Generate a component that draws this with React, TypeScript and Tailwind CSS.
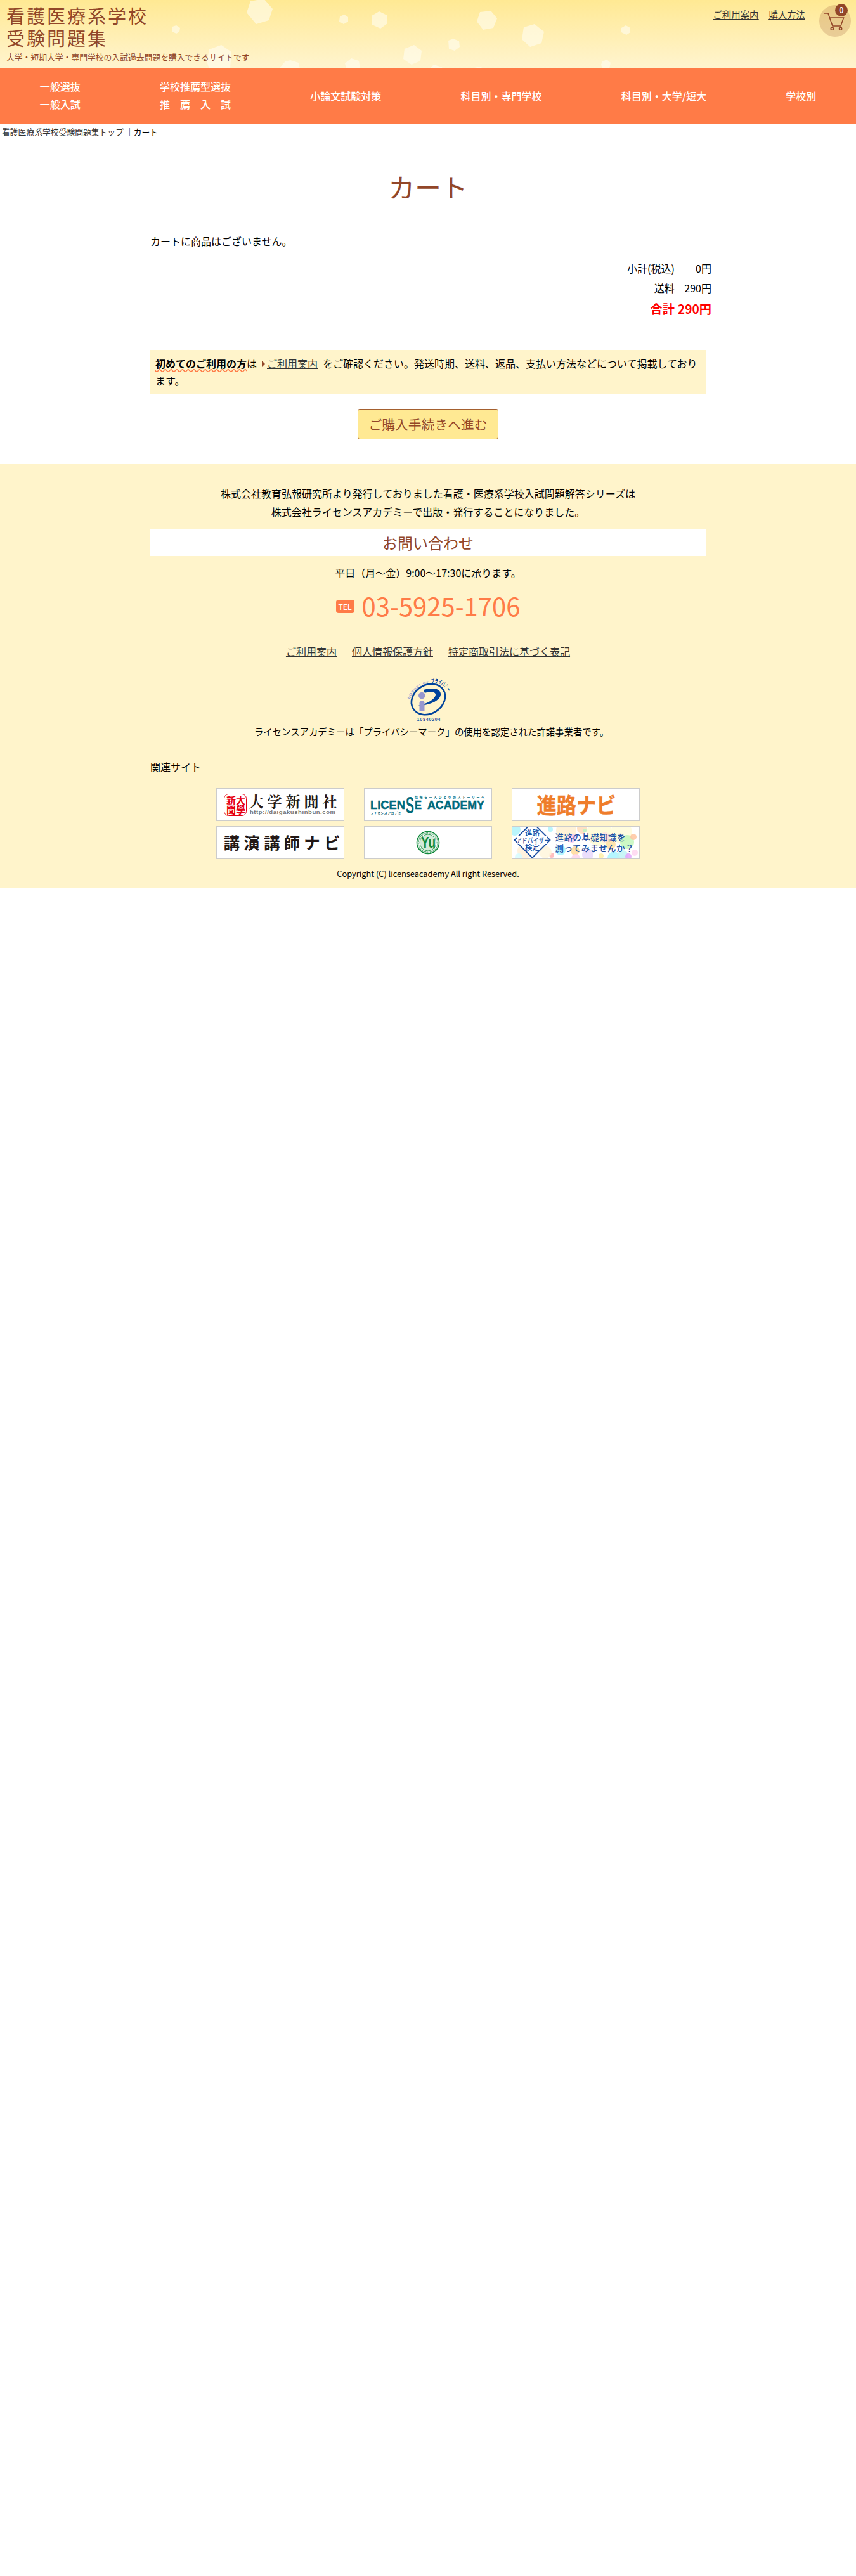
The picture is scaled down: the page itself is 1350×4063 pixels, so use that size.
import React from "react";

const brown = "#924628";

function Hexagons() {
  const polys = [
    "395,2 416,-2 430,14 424,32 404,38 389,20",
    "278,40 284,44 283,50 278,53 272,50 272,42",
    "330,78 349,71 365,82 363,108 330,108 326,97",
    "536,26 543,23 549,27 549,34 542,38 535,34",
    "586,25 598,18 610,24 611,37 600,45 587,39",
    "757,19 774,17 784,29 778,44 762,47 752,34",
    "826,43 843,38 858,50 854,68 836,74 823,62",
    "707,64 715,61 724,65 725,74 717,80 708,77",
    "638,77 653,71 665,80 663,96 649,102 636,93",
    "440,108 450,97 458,95 471,99 473,108",
    "544,100 554,92 566,96 568,108 546,108",
    "678,108 684,102 697,106 698,108",
    "743,108 758,105 761,108",
    "980,44 987,40 994,44 994,51 988,55 980,51",
    "950,97 957,94 963,99 961,108 950,108 948,102",
  ];
  return (
    <svg className="absolute inset-0" width="1350" height="108" aria-hidden="true">
      {polys.map((p) => (
        <polygon key={p} points={p} fill="#fffdf2" opacity="0.6" />
      ))}
    </svg>
  );
}

function Header() {
  return (
    <header className="relative flex h-[108px] justify-between overflow-hidden bg-linear-to-b from-[#ffe993] to-[#fff4cf]">
      <Hexagons />
      <div className="relative pl-[10px] pt-[7px] text-[#924628]">
        <h1 className="text-[29px] leading-[35px] font-normal tracking-[3px]">
          看護医療系学校
          <br />
          受験問題集
        </h1>
        <p className="pt-[2px] text-[12.8px] leading-[22px]">大学・短期大学・専門学校の入試過去問題を購入できるサイトです</p>
      </div>
      <div className="relative flex pr-2">
        <div className="flex gap-4 pt-[10px] pr-[22px] text-[14.4px] leading-[25px] text-[#333] underline">
          <a>ご利用案内</a>
          <a>購入方法</a>
        </div>
        <div className="relative mt-2 h-[50px] w-[50px] rounded-full bg-[#924628]/20">
          <svg className="absolute left-0 top-0" width="50" height="50" fill="none" stroke={brown} strokeWidth="1.6">
            <path d="M8 13H14L21 33H34L38.5 20H17" />
            <circle cx="20.3" cy="37.2" r="2.1" />
            <circle cx="33.6" cy="37.2" r="2.1" />
          </svg>
          <span className="absolute -top-[2px] left-[25px] flex h-5 w-5 items-center justify-center rounded-full bg-[#924628] text-[12.8px] leading-none font-medium text-white">
            0
          </span>
        </div>
      </div>
    </header>
  );
}

function Nav() {
  return (
    <nav className="flex h-[87px] items-center justify-around bg-[#ff7b47] text-base leading-[27.2px] font-medium text-white">
      <a className="pb-[2px]">一般選抜<br />一般入試</a>
      <a className="pb-[2px]">学校推薦型選抜<br />推　薦　入　試</a>
      <a>小論文試験対策</a>
      <a>科目別・専門学校</a>
      <a>科目別・大学/短大</a>
      <a>学校別</a>
    </nav>
  );
}

function PrivacyMark() {
  return (
    <svg width="80" height="82" viewBox="0 0 80 82" className="block overflow-visible">
      <defs>
        <path id="arcA" d="M11 43.500C13 33 24 21.500 43 18" />
        <path id="arcB" d="M44 17.500C55 15.500 65 19 71 33" />
      </defs>
      <text fontSize="6" fontWeight="700" fill="#9797cf">
        <textPath href="#arcA" textLength="41" lengthAdjust="spacingAndGlyphs">たいせつにします</textPath>
      </text>
      <text fontSize="8" fontWeight="700" fill="#00439c">
        <textPath href="#arcB" textLength="32" lengthAdjust="spacingAndGlyphs">プライバシー</textPath>
      </text>
      <ellipse cx="39.5" cy="43" rx="28" ry="22.5" transform="rotate(-32 39.5 43)" fill="none" stroke="#00439c" strokeWidth="2.6" />
      <path d="M32 28C42 25 58 24 59 34C60 43 46 52 20 54C38 50 50 43 51 36C51.500 31 42 30 34 33Z" fill="#00439c" />
      <circle cx="29.300" cy="37" r="5.300" fill="#9797cf" />
      <path d="M25.500 49Q25.500 45 29.500 45Q33.500 45 33.500 49V61.500L25.500 62Z" fill="#9797cf" />
      <text x="21.500" y="77" fontSize="7" fontWeight="700" fill="#1f55a5" textLength="37" fontFamily="Liberation Sans">10840204</text>
    </svg>
  );
}

function Frame({ children }: { children: React.ReactNode }) {
  return <a className="block h-[52px] w-[202px] overflow-hidden border border-[#ccc] bg-white">{children}</a>;
}

function Banners() {
  const dots: [number, number, number, string][] = [
    [4, 5, 9, "#aef3fb"], [20, 38, 12, "#fff0d8"], [60, 4, 4, "#aef3fb"], [85, 6, 16, "#fff0d0"], [110, 3, 8, "#ffdcb8"],
    [94, 18, 7, "#f5c6ee"], [76, 37, 8, "#a8f5ff"], [99, 38, 7, "#ffd99a"], [119, 44, 9, "#e8d8fb"], [62, 45, 4, "#ffb3b3"],
    [137, 10, 20, "#fffbd4"], [172, 9, 17, "#fffcd8"], [181, 24, 11, "#c4f7bc"], [191, 16, 5, "#ffc5a0"], [155, 28, 8, "#ffdfa0"],
    [160, 49, 10, "#a8f5ff"], [174, 46, 9, "#c0f5f5"], [183, 47, 5, "#e4a6fb"], [100, 50, 7, "#fbd4ec"], [114, 6, 3, "#bdf5c4"],
    [193, 41, 5, "#ffd6f0"], [140, 46, 4, "#fff0a8"], [146, 17, 8, "#ffe1de"], [52, 40, 10, "#fff6dc"], [10, 48, 6, "#d6fbff"],
  ];
  return (
    <div className="mx-auto grid w-[668px] grid-cols-[202px_202px_202px] gap-x-[31px] gap-y-2">
      <Frame>
        <svg width="200" height="50">
          <rect x="11.500" y="8.500" width="35" height="34" rx="7" fill="none" stroke="#e60012" />
          <g fill="#e60012" fontSize="15" fontWeight="700" fontFamily="Noto Sans CJK JP">
            <text x="15" y="24">新</text><text x="15" y="38.500">聞</text>
            <text x="30" y="24">大</text><text x="30" y="38.500">學</text>
          </g>
          <text x="50.500" y="29" fontSize="23" fontWeight="700" fill="#231815" textLength="139" fontFamily="Noto Serif CJK JP, Noto Sans CJK JP">大学新聞社</text>
          <text x="52" y="40" fontSize="9.500" fontWeight="700" fill="#777" textLength="135" fontFamily="Liberation Sans">http://daigakushinbun.com</text>
        </svg>
      </Frame>
      <Frame>
        <svg width="200" height="50" fill="#006a7d" fontFamily="Liberation Sans">
          <text x="9" y="32" fontSize="18" fontWeight="700" textLength="55" lengthAdjust="spacingAndGlyphs" stroke="#006a7d" strokeWidth=".5">LICEN</text>
          <text x="65" y="39" fontSize="37" fontWeight="700" textLength="13" lengthAdjust="spacingAndGlyphs">S</text>
          <text x="79" y="32" fontSize="18" fontWeight="700" textLength="11" lengthAdjust="spacingAndGlyphs" stroke="#006a7d" strokeWidth=".5">E</text>
          <text x="99" y="32" fontSize="18" fontWeight="700" textLength="90" lengthAdjust="spacingAndGlyphs" stroke="#006a7d" strokeWidth=".5">ACADEMY</text>
          <text x="9" y="40" fontSize="5" fontWeight="700" textLength="54" fontFamily="Noto Sans CJK JP">ライセンスアカデミー</text>
          <text x="79" y="15" fontSize="5" fontWeight="700" textLength="110" fontFamily="Noto Sans CJK JP">情報を一人ひとりのストーリーへ</text>
        </svg>
      </Frame>
      <Frame>
        <svg width="200" height="50">
          <text x="38.500" y="38.500" fontSize="34" fontWeight="700" fill="#ef7d2b" stroke="#ef7d2b" strokeWidth=".5" textLength="125" lengthAdjust="spacingAndGlyphs" fontFamily="Noto Sans CJK JP">進路ナビ</text>
        </svg>
      </Frame>
      <Frame>
        <svg width="200" height="50">
          <text x="10.500" y="35" fontSize="25.500" fontWeight="700" fill="#231815" textLength="184" fontFamily="Noto Sans CJK JP">講演講師ナビ</text>
        </svg>
      </Frame>
      <Frame>
        <svg width="200" height="50">
          <circle cx="100" cy="25" r="17.500" fill="#fff" stroke="#118a3c" strokeWidth="1.600" />
          <circle cx="100" cy="25" r="15.200" fill="none" stroke="#118a3c" strokeWidth="2" strokeDasharray="1 .8" opacity=".75" />
          <circle cx="100" cy="25" r="13" fill="#d3ead9" stroke="#118a3c" strokeWidth=".8" />
          <text x="89" y="33" fontSize="24" fontWeight="700" fill="#118a3c" textLength="23" lengthAdjust="spacingAndGlyphs" fontFamily="Liberation Sans">Yu</text>
        </svg>
      </Frame>
      <Frame>
        <svg width="200" height="50" fill="#1c50a4" fontFamily="Noto Sans CJK JP" fontWeight="700">
          {dots.map(([x, y, r, c], i) => (
            <circle key={i} cx={x} cy={y} r={r} fill={c} opacity=".85" />
          ))}
          <path d="M31.500 -7L59.500 21L31.500 49L3.500 21Z" fill="#fff" stroke="#1c50a4" strokeWidth="1.800" />
          <rect x="8" y="15" width="47" height="12" fill="#fff" />
          <text x="20" y="13.500" fontSize="11.500" textLength="23" fontWeight="500">進路</text>
          <text x="6" y="25.500" fontSize="11.500" textLength="53" lengthAdjust="spacingAndGlyphs" fontWeight="500">アドバイザー</text>
          <text x="20" y="37" fontSize="11.500" textLength="23" fontWeight="500">検定</text>
          <text x="67.500" y="22" fontSize="13.500" textLength="111" fontWeight="500">進路の基礎知識を</text>
          <text x="67.500" y="39" fontSize="13.500" textLength="124" fontWeight="500">測ってみませんか？</text>
        </svg>
      </Frame>
    </div>
  );
}

function Cart() {
  return (
    <main className="mx-auto h-[515px] w-[876px]">
      <h2 className="pt-[37px] text-center text-[41.6px] leading-[80px] font-normal text-[#924628]">カート</h2>
      <p className="pt-[32px] leading-7">カートに商品はございません。</p>
      <table className="-mr-[9px] ml-auto mt-[13px] text-right">
        <tbody>
          <tr className="h-[31px]"><td>小計(税込)</td><td className="pl-[5px]">0円</td></tr>
          <tr className="h-[31px]"><td>送料</td><td className="pl-[5px]">290円</td></tr>
          <tr className="h-[36px] text-[19.2px] font-bold text-[#f00]"><td>合計</td><td className="pl-[5px]">290円</td></tr>
        </tbody>
      </table>
      <p className="mt-[47px] h-[70px] bg-[#fff4cb] p-2 leading-[27.2px]">
        <b className="underline decoration-[#ff7b47] decoration-wavy">初めてのご利用の方</b>は
        <svg className="mr-[3px] ml-[8px] inline-block align-[1px]" width="5" height="10"><path d="M0 0L5 5L0 10Z" fill={brown} /></svg>
        <a className="mr-[8px] text-[#333] underline">ご利用案内</a>をご確認ください。発送時期、送料、返品、支払い方法などについて掲載しております。
      </p>
      <button className="mx-auto mt-[23px] block h-[48px] w-[222px] rounded-[3px] border border-[#a4602f] bg-[#ffe993] text-[20.8px] leading-[44px] text-[#924628]">
        ご購入手続きへ進む
      </button>
    </main>
  );
}

function Footer() {
  return (
    <footer className="h-[669px] bg-[#fff4cb] pt-[32px]">
      <div className="mx-auto w-[876px] text-center">
        <p className="text-base leading-[29px]">
          株式会社教育弘報研究所より発行しておりました看護・医療系学校入試問題解答シリーズは
          <br />
          株式会社ライセンスアカデミーで出版・発行することになりました。
        </p>
        <h3 className="mt-[12px] h-[43px] bg-white text-2xl leading-[43px] font-normal text-[#924628]">お問い合わせ</h3>
        <p className="mt-[12px] leading-7">平日（月～金）9:00～17:30に承ります。</p>
        <p className="mt-[4px] flex h-[68px] items-center justify-center gap-3 text-[40px] text-[#ff7b47]">
          <span className="mt-[3px] flex h-[21px] w-[29px] items-center justify-center rounded-[4px] bg-[#ff7b47] text-[12px] font-medium text-white">TEL</span>
          03-5925-1706
        </p>
        <p className="mt-[24px] flex justify-center gap-6 leading-7 text-[#333] underline">
          <a>ご利用案内</a>
          <a>個人情報保護方針</a>
          <a>特定商取引法に基づく表記</a>
        </p>
        <div className="mt-[19px] flex h-[82px] justify-center pl-[2px]"><PrivacyMark /></div>
        <p className="-mt-px pl-[11px] text-[14.4px] leading-[25px]">ライセンスアカデミーは「プライバシーマーク」の使用を認定された許諾事業者です。</p>
        <p className="mt-[29px] mb-[20px] text-left leading-7">関連サイト</p>
        <Banners />
        <p className="mt-[11px] text-[12.8px] leading-6">Copyright (C) licenseacademy All right Reserved.</p>
      </div>
    </footer>
  );
}

export default function App() {
  return (
    <div className="h-[4063px] bg-white font-['Noto_Sans_CJK_JP',sans-serif] text-base text-black" lang="ja">
      <Header />
      <Nav />
      <div className="h-[22px] pt-[2px] pl-[3px] text-[12.8px] leading-[22px]">
        <a className="text-[#333] underline">看護医療系学校受験問題集トップ</a>
        <span className="pl-[3px]">｜カート</span>
      </div>
      <Cart />
      <Footer />
    </div>
  );
}
